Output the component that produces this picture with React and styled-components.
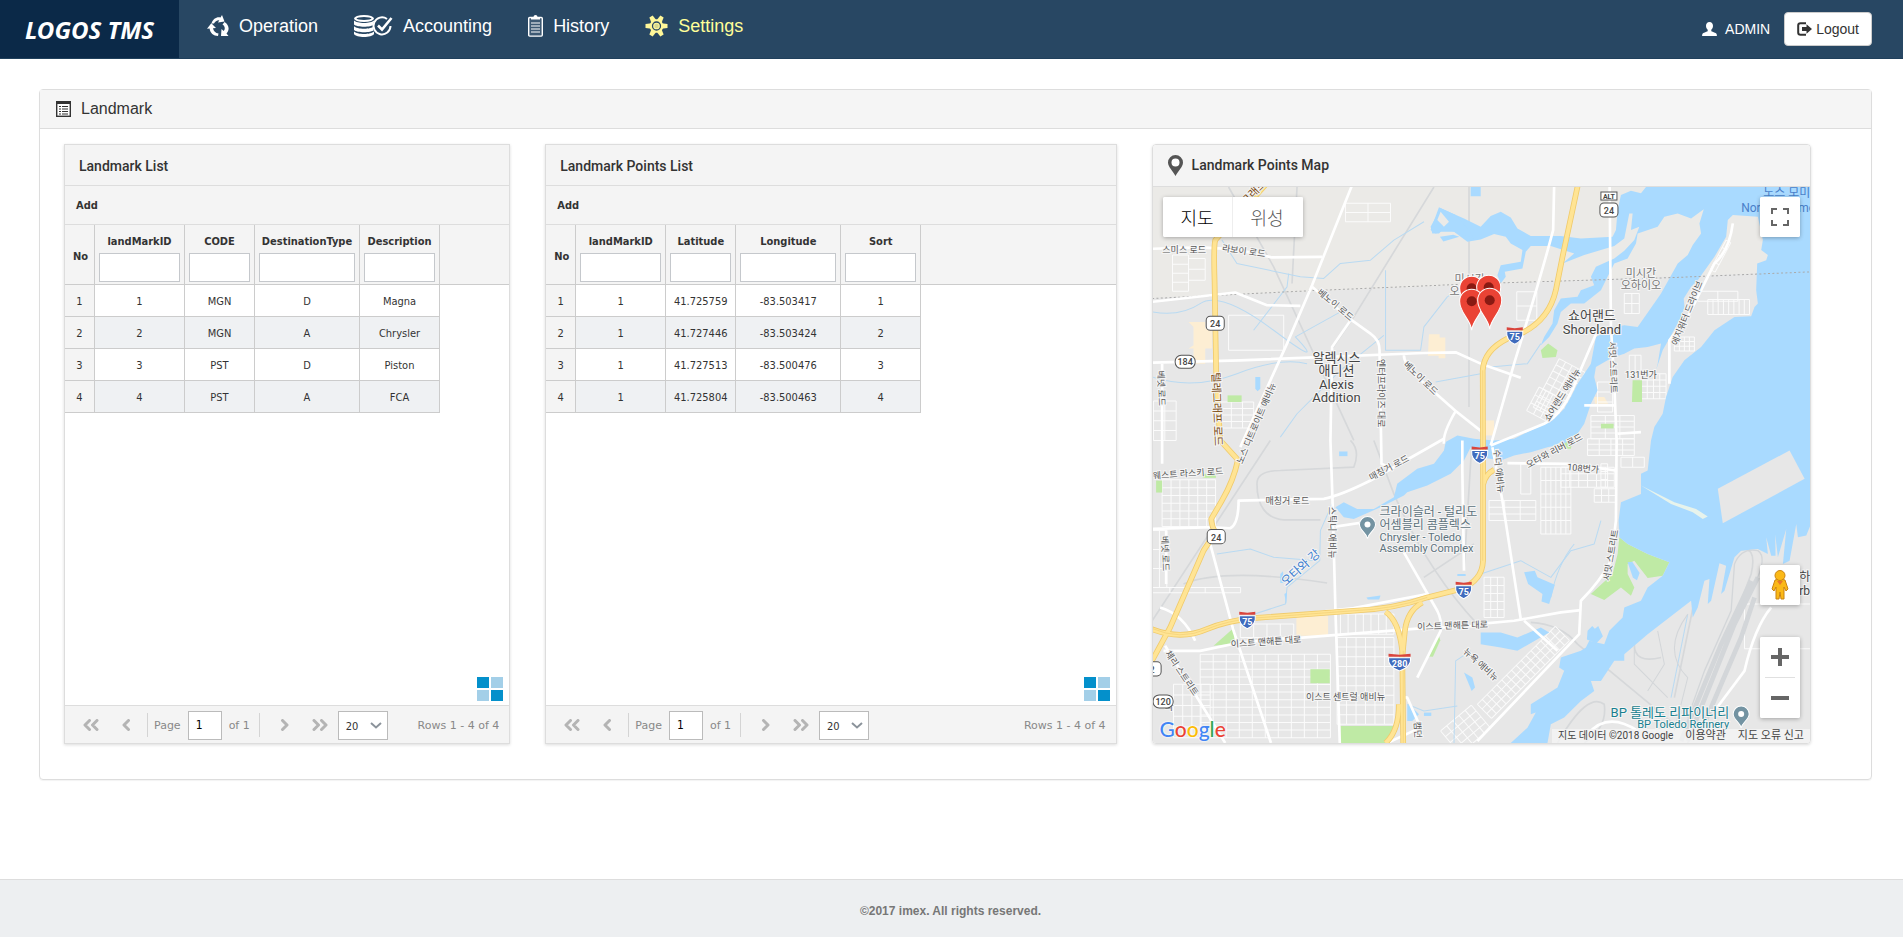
import React from "react";
import styled, { createGlobalStyle } from "styled-components";

const GlobalStyle = createGlobalStyle`
  *, *::before, *::after { box-sizing: border-box; }
  body {
    margin: 0;
    background: #fff;
    color: #333;
    font-family: "Liberation Sans", Arial, "Noto Sans CJK KR", sans-serif;
    font-size: 14px;
  }
`;

const GRID_FONT = `"DejaVu Sans Condensed", "DejaVu Sans", Tahoma, sans-serif`;
const MAP_FONT = `Roboto, "Noto Sans CJK KR", sans-serif`;

/* ---------- page frame ---------- */
const Page = styled.div`
  min-height: 100vh;
  display: flex;
  flex-direction: column;
`;
const Header = styled.header`
  display: flex;
  height: 59px;
  background: #284763;
  border-bottom: 1px solid #20405c;
`;
const Brand = styled.a`
  display: flex;
  align-items: center;
  justify-content: center;
  width: 179px;
  background: #0b2948;
  color: #fff;
  font: italic 700 24px "Noto Sans", sans-serif;
  text-decoration: none;
`;
const Nav = styled.nav`
  flex: 1;
  display: flex;
  align-items: center;
  gap: 36px;
  padding: 0 0 6px 28px;
`;
const NavLink = styled.a`
  display: flex;
  align-items: center;
  gap: 10px;
  color: ${(p) => (p.$active ? "#ffff99" : "#fff")};
  font-size: 18px;
  text-decoration: none;
`;
const UserArea = styled.div`
  display: flex;
  align-items: center;
  gap: 14px;
  padding-right: 31px;
`;
const UserName = styled.span`
  display: flex;
  align-items: center;
  gap: 8px;
  color: #fff;
`;
const LogoutButton = styled.button`
  display: flex;
  align-items: center;
  gap: 4px;
  height: 34px;
  padding: 0 12px;
  border: 1px solid #ccc;
  border-radius: 4px;
  background: #fff;
  color: #333;
  font: 14px "Liberation Sans", Arial, sans-serif;
`;
const Main = styled.main`
  flex: 1;
  padding: 30px 31px 40px 39px;
`;
const Section = styled.section`
  border: 1px solid #ddd;
  border-radius: 4px;
  box-shadow: 0 1px 1px rgba(0, 0, 0, 0.05);
`;
const SectionHead = styled.h1`
  display: flex;
  align-items: center;
  gap: 10px;
  height: 39px;
  margin: 0;
  padding: 0 16px;
  border-bottom: 1px solid #ddd;
  background: #f5f5f5;
  font-size: 16px;
  font-weight: 400;
`;
const Columns = styled.div`
  display: grid;
  grid-template-columns: 446fr 571fr 659fr;
  gap: 35px;
  padding: 15px 60px 35px 24px;
`;
const Footer = styled.footer`
  display: flex;
  align-items: center;
  justify-content: center;
  height: 58px;
  padding: 4px 2px 0 0;
  border-top: 1px solid #ddd;
  background: #edeff1;
  color: #777;
  font-size: 12px;
  font-weight: 700;
`;

/* ---------- data grid ---------- */
const Card = styled.article`
  display: flex;
  flex-direction: column;
  min-width: 0;
  min-height: 600px;
  border: 1px solid #ddd;
  border-radius: ${(p) => (p.$round ? "4px" : "0")};
  box-shadow: 0 1px 3px rgba(0, 0, 0, 0.14);
  overflow: hidden;
`;
const CardTitle = styled.h2`
  display: flex;
  align-items: center;
  gap: 9px;
  height: 41px;
  margin: 0;
  padding: 2px 14px 0;
  border-bottom: 1px solid #ddd;
  background: #f4f4f4;
  font: 500 14px Roboto, sans-serif;
  color: #333;
`;
const MapTitle = styled(CardTitle)`
  height: 42px;
  padding: 0 15px 1px;
`;
const Toolbar = styled.div`
  display: flex;
  align-items: center;
  height: 39px;
  padding: 0 11px;
  border-bottom: 1px solid #ddd;
  background: #f4f4f4;
`;
const AddButton = styled.button`
  padding: 0;
  border: 0;
  background: none;
  color: #333;
  font: 700 11px ${GRID_FONT};
`;
const GridBody = styled.div`
  position: relative;
  flex: 1;
  background: linear-gradient(#f4f4f4 59px, #ccc 59px, #ccc 60px, #fff 60px);
`;
const Table = styled.table`
  table-layout: fixed;
  width: 375px;
  border-collapse: separate;
  border-spacing: 0;
  font: 11px ${GRID_FONT};
  text-align: center;
`;
const HeadCell = styled.th`
  height: 60px;
  padding: ${(p) => (p.$plain ? "4px 0 0 2px" : "0 4px")};
  border-right: 1px solid #ccc;
  border-bottom: 1px solid #ccc;
  background: #f4f4f4;
  font-weight: 700;
  white-space: nowrap;
`;
const HeadLabel = styled.label`
  display: block;
  height: 25px;
  padding-top: 6px;
  line-height: 16px;
`;
const FilterInput = styled.input`
  display: block;
  width: 100%;
  height: 29px;
  border: 1px solid #c5c8cc;
  background: #fff;
`;
const Cell = styled.td`
  height: 32px;
  padding: 2px 0 0;
  border-right: 1px solid #ccc;
  border-bottom: 1px solid #ccc;
  background: ${(p) => (p.$index ? "#f4f4f4" : p.$alt ? "#eff1f3" : "#fff")};
`;
const LoadingMark = styled.svg`
  position: absolute;
  right: 6px;
  bottom: 4px;
`;
const Pager = styled.div`
  display: flex;
  align-items: center;
  height: 38px;
  padding: 1px 10px 0 8px;
  border-top: 1px solid #ddd;
  background: #f4f4f4;
  color: #888;
  font: 11px "DejaVu Sans", Verdana, sans-serif;
`;
const PagerButton = styled.button`
  display: flex;
  align-items: center;
  justify-content: center;
  width: 36px;
  height: 28px;
  padding: 0;
  border: 0;
  background: none;
`;
const Divider = styled.span`
  width: 1px;
  height: 24px;
  margin: 0 6px 0 ${(p) => (p.$last ? "9px" : "2px")};
  background: #d4d4d4;
`;
const PageField = styled.label`
  display: flex;
  align-items: center;
  gap: 7px;
`;
const PageInput = styled.input`
  width: 34px;
  height: 29px;
  padding: 0 7px;
  border: 1px solid #bbb;
  background: #fff;
  font: 12px ${GRID_FONT};
`;
const SelectWrap = styled.span`
  display: grid;
  align-items: center;
  width: 50px;
  height: 29px;
  border: 1px solid #bbb;
  background: #fff;
  & > * { grid-area: 1 / 1; }
  & > svg { justify-self: end; margin-right: 5px; pointer-events: none; }
`;
const PageSize = styled.select`
  appearance: none;
  width: 100%;
  height: 27px;
  padding: 2px 7px 0;
  border: 0;
  background: transparent;
  color: #333;
  font: 11px ${GRID_FONT};
`;
const RowCount = styled.span`
  margin-left: auto;
  white-space: nowrap;
`;

/* ---------- map ---------- */
const MapArea = styled.div`
  position: relative;
  flex: 1;
  overflow: hidden;
`;
const MapSvg = styled.svg`
  display: block;
  width: 100%;
  height: 100%;
  position: absolute;
  inset: 0;
`;
const MapBox = styled.div`
  position: absolute;
  display: flex;
  background: #fff;
  border-radius: 2px;
  box-shadow: 0 1px 4px rgba(0, 0, 0, 0.3);
  overflow: hidden;
`;
const TypeBox = styled(MapBox)`
  left: 10px;
  top: 10px;
`;
const FullBox = styled(MapBox)`
  right: 10px;
  top: 10px;
`;
const SideStack = styled.div`
  position: absolute;
  right: 10px;
  bottom: 25px;
  display: flex;
  flex-direction: column;
  gap: 32px;
`;
const StackBox = styled(MapBox)`
  position: static;
  flex-direction: column;
  align-items: center;
`;
const TypeButton = styled.button`
  width: 70px;
  height: 40px;
  padding: 0;
  border: 0;
  border-right: 1px solid ${(p) => (p.$on ? "#eee" : "#fff")};
  background: #fff;
  color: ${(p) => (p.$on ? "#000" : "#565656")};
  font: 300 18px ${MAP_FONT};
`;
const MapButton = styled.button`
  display: flex;
  align-items: center;
  justify-content: center;
  width: 40px;
  height: 40px;
  padding: 0;
  border: 0;
  background: #fff;
`;
const StackLine = styled.span`
  width: 30px;
  height: 1px;
  background: #e0e0e0;
`;
const Attribution = styled.div`
  position: absolute;
  right: 0;
  bottom: 0;
  display: flex;
  gap: 12px;
  height: 14px;
  padding: 0 6px;
  background: rgba(245, 245, 245, 0.75);
  color: #444;
  font: 11px/14px ${MAP_FONT};
  span { font-size: 10px; }
  a { color: #444; text-decoration: none; }
`;
const GoogleLogo = styled.a`
  position: absolute;
  left: 7px;
  bottom: 2px;
  font: 500 21px/25px Lato, sans-serif;
  text-decoration: none;
  text-shadow: 0 0 2px #fff, 0 0 2px #fff;
`;
const Letter = styled.span`
  color: ${(p) => p.$c};
`;

/* ---------- icons ---------- */
const RecycleIcon = () => (
  <svg width="22" height="22" viewBox="0 0 22 22" fill="#fff">
    <path d="M4.500 8.500 C6 3.500 10 1.500 13.500 2.500 L15 0 L17.500 6.500 L11 7.500 L12.300 5.200 C10 5 8 6.500 7 8.500 Z" />
    <path d="M17.500 7 C22 9.500 23 15 19.500 18.500 L21.500 21 L14 21 L14.500 14 L16.700 16 C18.500 14 18 11 15.500 9.500 Z" />
    <path d="M11 21 C6.500 21 3 18 2.600 13.500 L0 13.800 L4.300 8.300 L9 13 L6 13.200 C6.500 16 8.500 18 11.500 18.500 Z" />
  </svg>
);
const AccountingIcon = () => (
  <svg width="39" height="22" viewBox="0 0 39 22">
    <g fill="#fff">
      <ellipse cx="10" cy="3.500" rx="10" ry="3.500" />
      <path d="M0 5.500c3 3.300 17 3.300 20 0v4c-3 3-17 3-20 0zM0 11.300c3 3.300 17 3.300 20 0v3.700c-3 3-17 3-20 0zM0 16.600c3 3.300 17 3.300 20 0v2.400c-2 4-18 4-20 0z" />
    </g>
    <ellipse cx="10" cy="3.500" rx="7.500" ry="1.500" fill="#284763" />
    <circle cx="28.500" cy="11.500" r="9.800" fill="#284763" />
    <path d="M33 4 A8.500 8.500 0 1 0 36.500 11" fill="none" stroke="#fff" strokeWidth="2" />
    <path d="M24 10.500 L28 14.500 L37.500 3" fill="none" stroke="#fff" strokeWidth="2.600" />
  </svg>
);
const ClipboardIcon = () => (
  <svg width="15" height="22" viewBox="0 0 15 22">
    <rect x="0.700" y="2.500" width="13.600" height="18.600" rx="1" fill="#3d5973" stroke="#fff" strokeWidth="1.400" />
    <path d="M3 4.500V2h2.500a2 2 0 0 1 4 0H12v2.500z" fill="#fff" />
    <path d="M3 8h9M3 11h9M3 14h9M3 17h9" stroke="#fff" strokeWidth="1.200" />
  </svg>
);
const GearIcon = () => (
  <svg width="23" height="22" viewBox="0 0 23 22">
    <g fill="#fff799">
      {[30, 90, 150, 210, 270, 330].map((a) => (
        <path key={a} d="M8.700 6 L9.600 0 H13.400 L14.300 6 Z" transform={`rotate(${a} 11.500 11)`} />
      ))}
      <circle cx="11.500" cy="11" r="6.800" />
    </g>
    <circle cx="11.500" cy="11" r="4" fill="none" stroke="#284763" strokeWidth="1.300" />
    <circle cx="11.500" cy="11" r="2.200" fill="#d8d890" />
  </svg>
);
const UserIcon = () => (
  <svg width="15" height="14" viewBox="0 0 15 14" fill="#fff">
    <path d="M7.500 0c2.300 0 3.600 1.700 3.500 4-.1 1.700-.8 3-1.700 3.800v1.400c1.500.8 4.600 1.500 5.200 2.600.3.500.4 1.300.4 2.200H.1c0-.9.100-1.700.4-2.200.6-1.100 3.700-1.800 5.200-2.600V7.800C4.800 7 4.100 5.700 4 4 3.900 1.700 5.200 0 7.500 0z" />
  </svg>
);
const LogoutIcon = () => (
  <svg width="15" height="14" viewBox="0 0 15 14">
    <path d="M9 1.200H3.500A2.300 2.300 0 0 0 1.200 3.500v7a2.300 2.300 0 0 0 2.300 2.300H9" fill="none" stroke="#333" strokeWidth="2" />
    <path d="M5 5h4.500V2.200L15 7l-5.500 4.800V9H5z" fill="#333" />
  </svg>
);
const ListIcon = () => (
  <svg width="15" height="16" viewBox="0 0 15 16">
    <rect x="0.700" y="0.700" width="13.600" height="14.600" fill="#fff" stroke="#333" strokeWidth="1.400" />
    <path d="M0 0h15v3H0z" fill="#333" />
    <path d="M3 5.500h2M3 8h2M3 10.500h2M3 13h2M6 5.500h6M6 8h6M6 10.500h6M6 13h6" stroke="#333" strokeWidth="1.200" />
  </svg>
);
const PlaceIcon = () => (
  <svg width="15" height="21" viewBox="0 0 15 21">
    <path d="M7.500 0A7.500 7.500 0 0 0 0 7.500C0 12 5 16 7.500 21 10 16 15 12 15 7.500A7.500 7.500 0 0 0 7.500 0z" fill="#555" />
    <circle cx="7.500" cy="7.500" r="4" fill="#fff" />
  </svg>
);
const Chevron = ({ dir, twice }) => (
  <svg width="16" height="12" viewBox="0 0 16 12" fill="none" stroke="#b4b4b4" strokeWidth="3" strokeLinecap="round" strokeLinejoin="round">
    <g transform={dir === "right" ? "translate(16 0) scale(-1 1)" : undefined}>
      {twice ? <path d="M6.500 1.500L2 6l4.500 4.500M14 1.500L9.500 6l4.500 4.500" /> : <path d="M9.500 1.500L5 6l4.500 4.500" />}
    </g>
  </svg>
);

/* ---------- map drawing ---------- */
// Street block: nx by ny cells drawn from a corner, optionally rotated about it.
function block(x, y, w, h, nx, ny, rot = 0) {
  let d = "";
  for (let i = 0; i <= nx; i++) d += `M${x + (w * i) / nx} ${y}v${h}`;
  for (let j = 0; j <= ny; j++) d += `M${x} ${y + (h * j) / ny}h${w}`;
  return <path key={`${x}-${y}-${w}`} d={d} transform={rot ? `rotate(${rot} ${x} ${y})` : undefined} />;
}

const minorBlocks = [
  [97, 375, 48, 108, 1, 4], [145, 385, 50, 65, 1, 2], [40, 812, 68, 118, 2, 4], [240, 815, 100, 78, 3, 4],
  [66, 1048, 160, 140, 6, 6], [36, 1200, 44, 170, 2, 3], [36, 1370, 265, 16, 5, 1],
  [180, 1570, 390, 250, 10, 11], [600, 1450, 160, 60, 7, 1], [590, 1520, 170, 260, 6, 9], [300, 1480, 160, 40, 4, 1],
  [100, 1660, 110, 160, 4, 5], [615, 220, 135, 55, 2, 2], [265, 555, 165, 105, 1, 1],
  [1140, 1000, 30, 90, 1, 1], [1200, 1010, 90, 200, 6, 5], [1045, 1110, 140, 60, 3, 3], [1260, 1010, 160, 60, 6, 3],
  [1370, 755, 45, 90, 1, 3], [1350, 855, 130, 70, 3, 4], [1340, 925, 140, 50, 4, 3],
  [1500, 730, 75, 75, 4, 4], [1465, 675, 35, 60, 2, 1], [1440, 980, 70, 30, 2, 1], [1360, 1075, 65, 40, 3, 2],
  [1700, 508, 125, 45, 8, 1], [1600, 620, 60, 42, 4, 3], [1670, 483, 120, 30, 2, 1],
  [1030, 1340, 60, 120, 3, 5], [1128, 485, 60, 85, 1, 2], [1450, 490, 45, 60, 2, 2],
  [1255, 685, 110, 165, 5, 8, 28], [1195, 770, 70, 80, 3, 3, 28],
  [1010, 1720, 330, 60, 16, 3, -45], [900, 1800, 120, 90, 5, 4, -40],
  [1755, 330, 16, 100, 1, 4, 28], [1380, 1000, 20, 70, 1, 3], [1810, 1420, 200, 134, 1, 1],
];

const eastWater =
  "M990 171L495 171 480 190 450 182 420 195 410 240 405 300 395 320 300 325 240 318 150 318 110 295 90 262 60 245 30 258 0 290-50 265-120 235-150 290-145 310-125 310-110 295-80 305-40 335 0 328 40 312 75 320 90 340 125 360 120 395 60 405 50 435 60 460 75 440 72 425 125 415 135 365 150 348 210 348 280 370 245 400 310 375 400 348 430 325 445 250 455 250 450 300 475 290 460 330 430 362 400 385 345 410 330 440 340 465 300 480 290 500 240 505 220 540 215 580 190 620 180 645 205 620 230 580 240 545 270 520 310 520 360 480 380 440 400 400 440 385 465 340 470 310 530 290 550 260 590 250 630 265 668 238 655 280 660 310 635 345 620 375 590 400 540 490 470 590 430 585 400 590 345 620 330 700 290 760 270 800 250 835 215 870 150 900 100 925 40 930-20 925-70 915-105 935-110 960-140 1000-190 1015-250 1060-260 1100-320 1135-370 1135-410 1115-435 1130-410 1160-380 1165-300 1130-230 1095-220 1085-160 1065-90 1030-50 990-30 950 0 980 60 990 100 975 150 965 200 950 250 940 290 910 310 880 330 820 350 780 340 740 345 710 380 690 400 680 430 670 460 655 500 650 540 640 530 700 525 720 545 660 565 625 600 560 610 530 608 505 630 470 650 450 700 380 735 320 740 270 755 255 830 260 845 330 840 360 860 375 855 390 828 400 825 480 830 520 820 530 810 558 760 560 700 600 660 650 610 690 575 740 555 800 545 850 520 890 510 930 500 1020 480 1030 480 1090 420 1115 413 1170 415 1220 440 1240 500 1270 565 1295 545 1335 500 1370 480 1410 430 1430 425 1460 385 1500 370 1540 325 1530 315 1550 300 1560 240 1580 235 1610 250 1620 230 1670 150 1720 150 1750 165 1745 140 1790 90 1836 200 1836 210 1780 250 1760 300 1710 340 1680 330 1650 360 1650 400 1590 430 1590 430 1570 500 1510 630 1410 635 1460 650 1430 670 1350 685 1345 680 1420 690 1410 715 1298 735 1305 720 1390 730 1380 760 1280 780 1260 830 1255 860 1270 855 1220 870 1275 883 1275 882 1212 890 1280 915 1195 905 1300 925 1290 945 1180 950 1220 975 1215 985 1190 990 1180Z";

const hwy = [
  "M375 165 L330 215 L225 330 Q220 350 223 450 L228 740 L240 930 L293 988 Q280 1050 245 1110 L213 1165 Q215 1190 226 1205 L190 1260 L90 1490 L30 1600",
  "M30 1493 Q120 1530 200 1495 Q260 1470 340 1462 L640 1440 Q760 1435 860 1400 L960 1375 Q1025 1350 1027 1290 L1027 960 L1026 720 Q1030 660 1100 625 Q1220 590 1245 480 L1265 380 L1311 165",
  "M735 1443 Q775 1470 785 1560 L788 1840",
  "M845 1415 Q800 1440 793 1500 L785 1580",
  "M1060 1018 Q1035 1030 1028 1060",
  "M775 1720 Q775 1800 735 1836",
];
const roads = [
  "M635 165 L515 465 L440 640 L300 950",
  "M36 697 L300 690 L850 668 L945 666 L1020 700 L1140 742",
  "M36 356 L180 352 L290 358 L395 382 L545 380",
  "M515 470 L620 560 L690 610 Q718 630 717 660 L723 1000 L745 1010",
  "M632 568 L575 650 L570 930 L576 1100 L585 1440 L598 1836",
  "M790 675 Q790 700 830 740 L945 842 L1025 905 M945 842 Q905 910 910 940",
  "M36 1195 L215 1190 L270 1193 Q295 1180 295 1110 L550 1105 Q600 1095 690 1050 L910 925",
  "M585 1188 L690 1172", "M210 1240 L280 1500 L392 1836",
  "M66 700 L66 1000 M78 1200 V1360",
  "M70 1560 L180 1560 L300 1535 L590 1512 L840 1493 L1020 1485",
  "M60 1430 Q130 1450 165 1530 M75 1545 L255 1836",
  "M790 1265 Q850 1370 890 1440 Q905 1470 900 1500 L830 1640", "M780 1697 L800 1700 L840 1790 L740 1836",
  "M1240 165 L1237 300 Q1200 440 1120 700 L1050 945", "M1406 165 L1410 590 L1420 760 L1427 930 L1425 1170 L1410 1290 Q1380 1350 1320 1410 L1315 1510 L1010 1830",
  "M1010 1480 L1120 1470 L1260 1445 L1320 1438", "M1055 950 L1085 1110 L1140 1465", "M1150 1470 L1250 1560",
  "M1370 600 L1310 740 Q1270 850 1210 880 L1050 945",
  "M1775 280 Q1765 360 1720 400 L1640 560 L1585 630 V760", "M1890 1430 Q1840 1490 1810 1620 L1720 1740",
  "M965 930 V1020 L970 1320", "M1100 998 L1280 1000 L1425 1020", "M1330 825 H1425", "M1430 910 L1500 905",
  "M36 515 L285 487 L380 525 L480 527", "M1340 1810 Q1400 1740 1490 1800",
];
const rails = [
  "M880 171 L640 560 L575 655", "M265 171 L400 410 L640 930", "M470 171 L455 460", "M985 171 V830 M994 930 L970 1320",
  "M36 1470 L390 930 M1000 1240 L850 1340 M760 1090 L700 930 M760 1090 Q860 1320 1010 1480",
  "M350 1060 Q350 1020 420 1020 L640 1010 Q660 960 630 930 M350 1060 Q350 1160 430 1168 H540",
  "M1480 1540 Q1480 1600 1560 1580 M1790 1260 Q1850 1240 1830 1330 L1640 1836 M1660 1410 L1600 1700",
  "M1170 1475 Q1260 1480 1310 1540 L1600 1780", "M130 1360 Q250 1310 560 1357", "M1250 1836 Q1340 1680 1390 1720 Q1400 1790 1330 1836",
];
const creeks = [
  "M36 545 Q120 560 180 520 T400 600 T465 620 L600 545", "M245 330 L290 400 L480 440 L550 445 L600 400 L690 390 L760 330 L850 275",
  "M735 420 V660 L840 660 L850 590 L920 500 L1010 440", "M36 740 Q160 780 290 730 T500 700", "M885 755 L1020 730",
  "M420 920 L470 850 L600 720 L730 615", "M575 1120 L540 1200 L538 1290 L440 1370 L435 1420 L280 1470",
  "M230 1270 L330 1255 L400 1280 L530 1290", "M1020 1330 L1140 1290 L1230 1340 L1290 1260 L1360 1240 L1380 1170", "M1300 1240 Q1250 1300 1230 1400",
  "M1050 710 L1160 700 L1200 640", "M940 1840 L945 1590 L990 1560", "M800 1720 L850 1740 L950 1725", "M1640 1450 L1590 1700", "M445 430 L440 470 L340 600",
];
const greens = [
  "M262 795h42v20h-42z", "M48 1050h18v36h-18z", "M187 1030h40v12h-40z", "M220 1545l62-55v48z", "M510 1615h58v42h-58z",
  "M600 1785h170l-30 55h-140z", "M895 1515l-30 62 12 1 22-50z", "M1200 660l22-20 28 20-5 20-40 3z", "M1475 750h28v65h-30z",
  "M1380 880h38v14h-38z", "M1255 930h40l-5 25h-25z",
  "M1435 1220L1460 1240 1520 1270 1585 1295 1565 1335 1520 1342 1480 1290 1460 1300 1460 1330 1480 1370 1470 1395 1440 1370 1390 1408 1350 1390 1415 1330 1430 1270Z",
];
const sands = ["M145 575h50v20h20v60h-20v45h-35v-45h-15l15-10v-55z", "M865 612h32v10h17v62h-20v-8h-32z", "M468 1455h95v60h-95z", "M1360 800h30l12 20h-40z", "M1020 870h40v45h-40z"];
const ponds = [
  "M345 740h15v35l-8 8-7-8z", "M596 963h25v14h-25z", "M420 1330l8-8 2 35h-10z", "M432 1390l8-5-2 35z", "M678 1400l42-6-4 12h-34z",
  "M970 1625l25 15 8 30-10 10z", "M990 171h30v28h-30z", "M898 320l10 14 48-14-18-6z",
  "M1020 1505L1080 1505 1130 1520 1200 1490 1225 1505 1130 1560 1080 1550 1020 1540Z",
  "M1150 1325L1182 1320 1190 1340 1242 1362 1225 1420 1202 1412 1205 1390 1162 1360Z",
  "M1340 1500l14-14 8 8 10-8 14 30-20 22-28-12z", "M1460 1295l14-2 22 34-8 22-12-8z", "M800 1720l15 10 20 20-20 20h-15z", "M850 1745h22v10h-22z", "M950 1330h25v6h-25z",
];

const labels = [
  ["스미스 로드", 32, 66, 0], ["라보이 로드", 91, 67, 8], ["베노이 로드", 181, 120, 40], ["베노이 로드", 266, 193, 44],
  ["베넷 로드", 6, 201, 88], ["노스 디트로이트 애비뉴", 107, 237, -67], ["엔터프라이즈 대로", 225, 206, 90],
  ["에지워터 드라이브", 537, 127, -68], ["서밋 스트리트", 457, 180, 88], ["131번가", 488, 191, 0], ["쇼어랜드 애비뉴", 412, 209, -58],
  ["웨스트 라스키 로드", 36, 289, -4], ["매칭거 로드", 135, 316, 0], ["매칭거 로드", 238, 283, -28], ["베넷 로드", 10, 366, 88],
  ["스틱니 애비뉴", 177, 345, 90], ["이스트 맨해튼 대로", 114, 457, -4], ["이스트 맨해튼 대로", 300, 441, -2],
  ["체리 스트리트", 27, 487, 56], ["이스트 센트럴 애비뉴", 193, 512, 0], ["뉴욕 애비뉴", 326, 479, 42], ["캠던", 262, 542, 86],
  ["수더 애비뉴", 343, 284, 84], ["오타와 리버 로드", 403, 266, -28], ["108번가", 430, 284, 5], ["서밋 스트리트", 461, 368, -80],
  ["파", 17, 522, 0],
];

const Interstate = ({ x, y, n }) => {
  const w = n.length > 2 ? 11 : 8;
  return (
    <g transform={`translate(${x} ${y})`}>
      <path d={`M${-w} -4 Q${-w - 1} 5 0 9 Q${w + 1} 5 ${w} -4Z`} fill="#3f6bbd" stroke="#fff" strokeWidth="1" />
      <path d={`M${-w} -8 L${-w} -5 H${w} V-8 L0 -7Z`} fill="#d9453d" />
      <text y="5" fontSize="9" fontWeight="700" fill="#fff" textAnchor="middle">{n}</text>
    </g>
  );
};
const Route = ({ x, y, n, oval }) => (
  <g transform={`translate(${x} ${y})`}>
    <rect x={oval ? -10 : -9} y={oval ? -6 : -7} width={oval ? 20 : 18} height={oval ? 13 : 14} rx={oval ? 6 : 4} fill="#fff" stroke="#555" strokeWidth="1" />
    <text y="4" fontSize="9" fontWeight="500" fill="#444" textAnchor="middle">{n}</text>
  </g>
);
const Marker = ({ x, y }) => (
  <g transform={`translate(${x} ${y})`}>
    <path d="M0 0C-1 -11 -12 -17 -12 -29A12 12 0 0 1 12 -29C12 -17 1 -11 0 0Z" fill="#ea4335" stroke="#fff" strokeWidth="1" />
    <circle cy="-29" r="5" fill="#891a13" />
  </g>
);
const PlacePin = ({ x, y }) => (
  <g transform={`translate(${x} ${y})`}>
    <path d="M0 10C-1 4 -8 2 -8 -4A8 8 0 0 1 8 -4C8 2 1 4 0 10Z" fill="#7393a2" stroke="#fff" strokeWidth="1" />
    <circle cy="-4" r="3" fill="#fff" />
  </g>
);

const MapDrawing = () => (
  <MapSvg viewBox="0 0 658 555" preserveAspectRatio="xMidYMid slice" fontFamily={MAP_FONT} role="img" aria-label="Landmark Points Map">
    <g transform="scale(0.33333) translate(-36 -171)" fill="none" strokeLinejoin="round">
      <path d="M0 100H2100V1900H0Z" fill="#e7e7e7" />
      <path d="M0 100H2100V422L1600 438 1020 462 0 505Z" fill="#ebeae7" />
      <g stroke="#d6d8da" strokeWidth="5">{rails.map((d) => <path key={d} d={d} />)}</g>
      {sands.map((d) => <path key={d} d={d} fill="#fdeed3" />)}
      <g stroke="#fbfbfb" strokeWidth="3">{minorBlocks.map((b) => block(...b))}</g>
      {greens.map((d) => <path key={d} d={d} fill="#bfeaa5" />)}
      <g stroke="#b9daf2" strokeWidth="3">{creeks.map((d) => <path key={d} d={d} />)}</g>
      <path d={eastWater} transform="translate(1020 0)" fill="#a9daff" />
      <path d="M895 232L945 255 985 300 1000 325 940 305 900 305 885 310 870 300Z" fill="#a9daff" />
      <path d="M900 245L925 275 910 290 890 270Z" fill="#ebeae7" />
      {ponds.map((d) => <path key={d} d={d} fill="#a9daff" />)}
      <path d="M1730 1075L1945 960 1990 1045 1745 1178Z" fill="#e7e7e7" />
      <path d="M1500 1065L1600 1115 1665 1135 1700 1158 1685 1165 1655 1145 1590 1120Z" fill="#e7f3ec" />
      <g stroke="#d3d6d9" strokeWidth="14">
        <path d="M1850 1340L1780 1480 1640 1830M1830 1350L1740 1540 1620 1830M1840 1400L1800 1520 1680 1800" />
        <path d="M1780 1300Q1800 1250 1850 1260Q1880 1280 1840 1360M1780 1300L1770 1440 1690 1620 1640 1760" strokeWidth="4" />
        <path d="M1640 1450Q1560 1560 1640 1640L1600 1800M1550 1500L1570 1600 1520 1680M1480 1550V1600L1580 1700" strokeWidth="3" />
      </g>
      <path d="M36 505L500 482 1020 460 1600 442 2010 425" stroke="#aaa" strokeWidth="3" strokeDasharray="6 7" />
      <g stroke="#fff" strokeWidth="8">{roads.map((d) => <path key={d} d={d} />)}</g>
      <path d="M345 1465L640 1432 860 1390" stroke="#fff" strokeWidth="8" />
      <g stroke="#f0cb6c" strokeWidth="17">{hwy.map((d) => <path key={d} d={d} />)}</g>
      <g stroke="#ffe494" strokeWidth="12">{hwy.map((d) => <path key={d} d={d} />)}</g>
      <path d="M36 1493Q120 1530 200 1495Q260 1470 340 1462L640 1440Q760 1435 860 1400M1026 720V1290M788 1560V1840" stroke="#f2cf74" strokeWidth="2" />
    </g>

    <g fontSize="9" fill="#555" stroke="#f5f5f5" strokeWidth="2" paintOrder="stroke" textAnchor="middle">
      {labels.map(([t, x, y, r]) => (
        <text key={t + x} x={x} y={y} transform={`rotate(${r} ${x} ${y})`}>{t}</text>
      ))}
      <g fontSize="11" fill="#7a4a10">
        <text x="61" y="222" transform="rotate(88 61 222)">텔레그래프 로드</text>
        <text x="104" y="8" transform="rotate(-45 104 8)">그래프</text>
      </g>
      <g fontSize="13" fill="#444">
        <text x="184" y="175">알렉시스</text><text x="184" y="188">애디션</text><text x="184" y="202">Alexis</text><text x="184" y="215">Addition</text>
        <text x="439" y="133">쇼어랜드</text><text x="439" y="147">Shoreland</text>
      </g>
      <g fontSize="11" fill="#777">
        <text x="488" y="90">미시간</text><text x="488" y="102">오하이오</text>
        <text x="317" y="96">미시간</text><text x="317" y="108">오하이오</text>
      </g>
      <text x="151" y="383" fontSize="12" fill="#3a7dd0" transform="rotate(-42 151 383)">오타와 강</text>
      <g fontSize="12" textAnchor="start" fill="#4a7fc9" stroke="none">
        <text x="610" y="10">노스 모미 만</text><text x="588" y="25">North Maumee Bay</text>
      </g>
      <g textAnchor="start" fill="#5d727c">
        <g fontSize="12"><text x="227" y="328">크라이슬러 - 털리도</text><text x="227" y="341">어셈블리 콤플렉스</text></g>
        <g fontSize="11"><text x="227" y="353">Chrysler - Toledo</text><text x="227" y="364">Assembly Complex</text></g>
      </g>
      <g textAnchor="end" fill="#187f8f">
        <text x="576" y="529" fontSize="13">BP 톨레도 리파이너리</text><text x="576" y="540" fontSize="11">BP Toledo Refinery</text>
      </g>
      <g fontSize="12" textAnchor="start" fill="#444"><text x="646" y="393">하버</text><text x="646" y="407">rbor</text></g>
    </g>

    <Route x={63} y={136} n="24" /><Route x={64} y={349} n="24" /><Route x={456} y={23} n="24" /><Route x={0} y={481} n="2" />
    <Route x={33} y={174} n="184" oval /><Route x={11} y={513} n="120" oval />
    <rect x="448" y="5" width="16" height="8" fill="#fff" stroke="#555" />
    <text x="456" y="12" fontSize="7" fontWeight="700" fill="#444" textAnchor="middle">ALT</text>
    <Interstate x={362} y={148} n="75" /><Interstate x={327} y={267} n="75" /><Interstate x={311} y={402} n="75" />
    <Interstate x={95} y={432} n="75" /><Interstate x={247} y={474} n="280" />
    <PlacePin x={215} y={341} /><PlacePin x={588} y={530} />
    <Marker x={319} y={130} /><Marker x={336} y={129} /><Marker x={319} y={143} /><Marker x={337} y={142} />
  </MapSvg>
);

const GOOGLE = [["G", "#4285f4"], ["o", "#ea4335"], ["o", "#fbbc05"], ["g", "#4285f4"], ["l", "#34a853"], ["e", "#ea4335"]];

function LandmarkMap() {
  return (
    <Card $round>
      <MapTitle><PlaceIcon />Landmark Points Map</MapTitle>
      <MapArea>
        <MapDrawing />
        <TypeBox>
          <TypeButton type="button" $on>지도</TypeButton>
          <TypeButton type="button">위성</TypeButton>
        </TypeBox>
        <FullBox>
          <MapButton type="button" aria-label="전체화면">
            <svg width="18" height="18" viewBox="0 0 18 18" fill="none" stroke="#666" strokeWidth="2">
              <path d="M1 6V1h5M12 1h5v5M17 12v5h-5M6 17H1v-5" />
            </svg>
          </MapButton>
        </FullBox>
        <SideStack>
          <StackBox>
            <MapButton type="button" aria-label="스트리트 뷰">
              <svg width="18" height="30" viewBox="0 0 18 30" fill="#fbb917" stroke="#c98312">
                <path d="M4 10Q9 8 14 10L17 19 15 21 13 17 13 29H10L9 22 8 29H5L5 17 3 21 1 19Z" />
                <circle cx="9" cy="5.500" r="5" />
                <path d="M6 11L9 15 12 11Z" fill="#e8762c" stroke="none" />
              </svg>
            </MapButton>
          </StackBox>
          <StackBox>
            <MapButton type="button" aria-label="확대">
              <svg width="18" height="18" viewBox="0 0 18 18" fill="#666"><path d="M7 0h4v7h7v4h-7v7H7v-7H0V7h7z" /></svg>
            </MapButton>
            <StackLine />
            <MapButton type="button" aria-label="축소">
              <svg width="18" height="4" viewBox="0 0 18 4" fill="#666"><path d="M0 0h18v4H0z" /></svg>
            </MapButton>
          </StackBox>
        </SideStack>
        <GoogleLogo href="#google" aria-label="Google">
          {GOOGLE.map(([ch, c], i) => <Letter key={i} $c={c}>{ch}</Letter>)}
        </GoogleLogo>
        <Attribution>
          <span>지도 데이터 ©2018 Google</span>
          <a href="#terms">이용약관</a>
          <a href="#report">지도 오류 신고</a>
        </Attribution>
      </MapArea>
    </Card>
  );
}

const COL_WIDTHS = [30, 90, 70, 105, 80];

function DataGrid({ id, title, columns, rows }) {
  return (
    <Card>
      <CardTitle>{title}</CardTitle>
      <Toolbar><AddButton type="button">Add</AddButton></Toolbar>
      <GridBody>
        <Table>
          <colgroup>{COL_WIDTHS.map((w, i) => <col key={i} width={w} />)}</colgroup>
          <thead>
            <tr>
              <HeadCell $plain>No</HeadCell>
              {columns.map((c) => (
                <HeadCell key={c}>
                  <HeadLabel htmlFor={`${id}-${c}`}>{c}</HeadLabel>
                  <FilterInput id={`${id}-${c}`} type="text" />
                </HeadCell>
              ))}
            </tr>
          </thead>
          <tbody>
            {rows.map((row, r) => (
              <tr key={r}>
                <Cell $index>{r + 1}</Cell>
                {row.map((v, i) => <Cell key={i} $alt={r % 2 === 1}>{v}</Cell>)}
              </tr>
            ))}
          </tbody>
        </Table>
        <LoadingMark width="26" height="24" viewBox="0 0 26 24">
          <path d="M0 0h12v11H0zM14 13h12v11H14z" fill="#0490cb" />
          <path d="M14 0h12v11H14zM0 13h12v11H0z" fill="#a3cfe8" />
        </LoadingMark>
      </GridBody>
      <Pager>
        <PagerButton type="button" aria-label="First page"><Chevron dir="left" twice /></PagerButton>
        <PagerButton type="button" aria-label="Previous page"><Chevron dir="left" /></PagerButton>
        <Divider />
        <PageField>Page <PageInput type="text" defaultValue="1" /> of 1</PageField>
        <Divider $last />
        <PagerButton type="button" aria-label="Next page"><Chevron dir="right" /></PagerButton>
        <PagerButton type="button" aria-label="Last page"><Chevron dir="right" twice /></PagerButton>
        <SelectWrap>
          <PageSize defaultValue="20" aria-label="Rows per page"><option>20</option><option>50</option></PageSize>
          <svg width="12" height="7" viewBox="0 0 12 7" fill="none" stroke="#8b939b" strokeWidth="2"><path d="M1 1l5 4.500L11 1" /></svg>
        </SelectWrap>
        <RowCount>Rows 1 - 4 of 4</RowCount>
      </Pager>
    </Card>
  );
}

const NAV = [
  ["Operation", RecycleIcon], ["Accounting", AccountingIcon], ["History", ClipboardIcon], ["Settings", GearIcon],
];

export default function App() {
  return (
    <Page>
      <GlobalStyle />
      <Header>
        <Brand href="#home">LOGOS TMS</Brand>
        <Nav>
          {NAV.map(([name, Icon]) => (
            <NavLink key={name} href={`#${name}`} $active={name === "Settings"}><Icon />{name}</NavLink>
          ))}
        </Nav>
        <UserArea>
          <UserName><UserIcon />ADMIN</UserName>
          <LogoutButton type="button"><LogoutIcon />Logout</LogoutButton>
        </UserArea>
      </Header>
      <Main>
        <Section>
          <SectionHead><ListIcon />Landmark</SectionHead>
          <Columns>
            <DataGrid
              id="landmark"
              title="Landmark List"
              columns={["landMarkID", "CODE", "DestinationType", "Description"]}
              rows={[["1", "MGN", "D", "Magna"], ["2", "MGN", "A", "Chrysler"], ["3", "PST", "D", "Piston"], ["4", "PST", "A", "FCA"]]}
            />
            <DataGrid
              id="points"
              title="Landmark Points List"
              columns={["landMarkID", "Latitude", "Longitude", "Sort"]}
              rows={[
                ["1", "41.725759", "-83.503417", "1"], ["1", "41.727446", "-83.503424", "2"],
                ["1", "41.727513", "-83.500476", "3"], ["1", "41.725804", "-83.500463", "4"],
              ]}
            />
            <LandmarkMap />
          </Columns>
        </Section>
      </Main>
      <Footer>©2017 imex. All rights reserved.</Footer>
    </Page>
  );
}
